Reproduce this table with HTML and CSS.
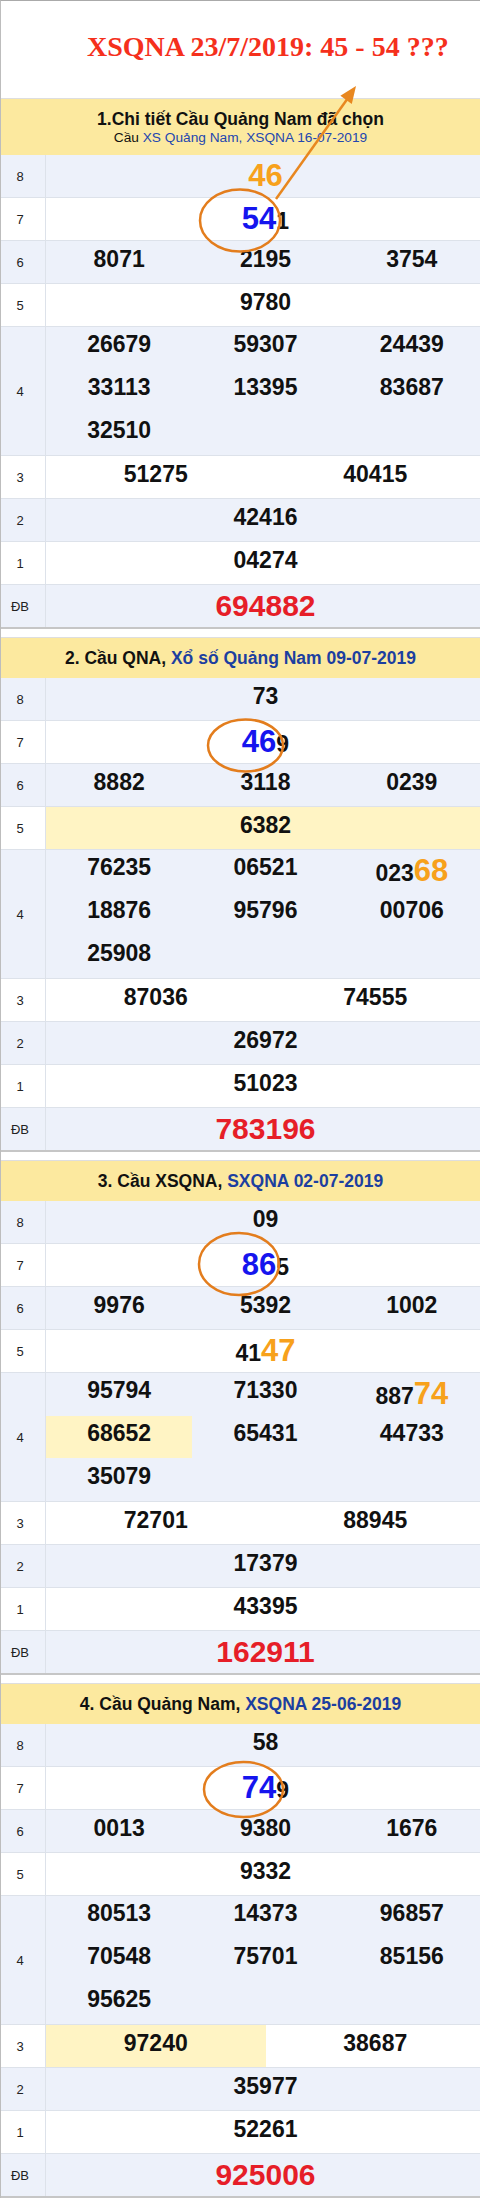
FILE: index.html
```html
<!DOCTYPE html>
<html lang="vi">
<head>
<meta charset="utf-8">
<title>XSQNA 23/7/2019</title>
<link rel="stylesheet" href="styles.css">
</head>
<body>
<div class="page">
  <div class="top"><h1 class="title">XSQNA 23/7/2019: 45 - 54 ???</h1></div>

  <section class="sec">
    <div class="head head1">
      <div class="h-title">1.Chi tiết Cầu Quảng Nam đã chọn</div>
      <div class="h-sub">Cầu <span class="blue">XS Quảng Nam, XSQNA 16-07-2019</span></div>
    </div>
    <div class="row alt"><div class="lbl">8</div><div class="nums c1"><div class="cell mix"><span><b class="big or">46</b></span></div></div></div>
    <div class="row"><div class="lbl">7</div><div class="nums c1"><div class="cell mix"><span><b class="big bl">54</b>1</span></div></div></div>
    <div class="row alt"><div class="lbl">6</div><div class="nums c3"><div class="cell"><span>8071</span></div><div class="cell"><span>2195</span></div><div class="cell"><span>3754</span></div></div></div>
    <div class="row"><div class="lbl">5</div><div class="nums c1"><div class="cell"><span>9780</span></div></div></div>
    <div class="row alt r4"><div class="lbl">4</div><div class="nums c3">
      <div class="cell"><span>26679</span></div><div class="cell"><span>59307</span></div><div class="cell"><span>24439</span></div>
      <div class="cell"><span>33113</span></div><div class="cell"><span>13395</span></div><div class="cell"><span>83687</span></div>
      <div class="cell"><span>32510</span></div>
    </div></div>
    <div class="row"><div class="lbl">3</div><div class="nums c2"><div class="cell"><span>51275</span></div><div class="cell"><span>40415</span></div></div></div>
    <div class="row alt"><div class="lbl">2</div><div class="nums c1"><div class="cell"><span>42416</span></div></div></div>
    <div class="row"><div class="lbl">1</div><div class="nums c1"><div class="cell"><span>04274</span></div></div></div>
    <div class="row alt db"><div class="lbl">ĐB</div><div class="nums c1"><div class="cell"><span>694882</span></div></div></div>
  </section>

  <section class="sec">
    <div class="head head2">2. Cầu QNA, <span class="blue">Xổ số Quảng Nam 09-07-2019</span></div>
    <div class="row alt"><div class="lbl">8</div><div class="nums c1"><div class="cell"><span>73</span></div></div></div>
    <div class="row"><div class="lbl">7</div><div class="nums c1"><div class="cell mix"><span><b class="big bl">46</b>9</span></div></div></div>
    <div class="row alt"><div class="lbl">6</div><div class="nums c3"><div class="cell"><span>8882</span></div><div class="cell"><span>3118</span></div><div class="cell"><span>0239</span></div></div></div>
    <div class="row"><div class="lbl">5</div><div class="nums c1 hl"><div class="cell"><span>6382</span></div></div></div>
    <div class="row alt r4"><div class="lbl">4</div><div class="nums c3">
      <div class="cell"><span>76235</span></div><div class="cell"><span>06521</span></div><div class="cell mix"><span>023<b class="big or">68</b></span></div>
      <div class="cell"><span>18876</span></div><div class="cell"><span>95796</span></div><div class="cell"><span>00706</span></div>
      <div class="cell"><span>25908</span></div>
    </div></div>
    <div class="row"><div class="lbl">3</div><div class="nums c2"><div class="cell"><span>87036</span></div><div class="cell"><span>74555</span></div></div></div>
    <div class="row alt"><div class="lbl">2</div><div class="nums c1"><div class="cell"><span>26972</span></div></div></div>
    <div class="row"><div class="lbl">1</div><div class="nums c1"><div class="cell"><span>51023</span></div></div></div>
    <div class="row alt db"><div class="lbl">ĐB</div><div class="nums c1"><div class="cell"><span>783196</span></div></div></div>
  </section>

  <section class="sec">
    <div class="head head2">3. Cầu XSQNA, <span class="blue">SXQNA 02-07-2019</span></div>
    <div class="row alt"><div class="lbl">8</div><div class="nums c1"><div class="cell"><span>09</span></div></div></div>
    <div class="row"><div class="lbl">7</div><div class="nums c1"><div class="cell mix"><span><b class="big bl">86</b>5</span></div></div></div>
    <div class="row alt"><div class="lbl">6</div><div class="nums c3"><div class="cell"><span>9976</span></div><div class="cell"><span>5392</span></div><div class="cell"><span>1002</span></div></div></div>
    <div class="row"><div class="lbl">5</div><div class="nums c1"><div class="cell mix"><span>41<b class="big or">47</b></span></div></div></div>
    <div class="row alt r4"><div class="lbl">4</div><div class="nums c3">
      <div class="cell"><span>95794</span></div><div class="cell"><span>71330</span></div><div class="cell mix"><span>887<b class="big or">74</b></span></div>
      <div class="cell hl"><span>68652</span></div><div class="cell"><span>65431</span></div><div class="cell"><span>44733</span></div>
      <div class="cell"><span>35079</span></div>
    </div></div>
    <div class="row"><div class="lbl">3</div><div class="nums c2"><div class="cell"><span>72701</span></div><div class="cell"><span>88945</span></div></div></div>
    <div class="row alt"><div class="lbl">2</div><div class="nums c1"><div class="cell"><span>17379</span></div></div></div>
    <div class="row"><div class="lbl">1</div><div class="nums c1"><div class="cell"><span>43395</span></div></div></div>
    <div class="row alt db"><div class="lbl">ĐB</div><div class="nums c1"><div class="cell"><span>162911</span></div></div></div>
  </section>

  <section class="sec">
    <div class="head head2">4. Cầu Quảng Nam, <span class="blue">XSQNA 25-06-2019</span></div>
    <div class="row alt"><div class="lbl">8</div><div class="nums c1"><div class="cell"><span>58</span></div></div></div>
    <div class="row"><div class="lbl">7</div><div class="nums c1"><div class="cell mix"><span><b class="big bl">74</b>9</span></div></div></div>
    <div class="row alt"><div class="lbl">6</div><div class="nums c3"><div class="cell"><span>0013</span></div><div class="cell"><span>9380</span></div><div class="cell"><span>1676</span></div></div></div>
    <div class="row"><div class="lbl">5</div><div class="nums c1"><div class="cell"><span>9332</span></div></div></div>
    <div class="row alt r4"><div class="lbl">4</div><div class="nums c3">
      <div class="cell"><span>80513</span></div><div class="cell"><span>14373</span></div><div class="cell"><span>96857</span></div>
      <div class="cell"><span>70548</span></div><div class="cell"><span>75701</span></div><div class="cell"><span>85156</span></div>
      <div class="cell"><span>95625</span></div>
    </div></div>
    <div class="row"><div class="lbl">3</div><div class="nums c2"><div class="cell hl"><span>97240</span></div><div class="cell"><span>38687</span></div></div></div>
    <div class="row alt"><div class="lbl">2</div><div class="nums c1"><div class="cell"><span>35977</span></div></div></div>
    <div class="row"><div class="lbl">1</div><div class="nums c1"><div class="cell"><span>52261</span></div></div></div>
    <div class="row alt db"><div class="lbl">ĐB</div><div class="nums c1"><div class="cell"><span>925006</span></div></div></div>
  </section>

  <svg class="marks" width="480" height="2201" viewBox="0 0 480 2201" aria-hidden="true">
    <g fill="none" stroke="#e37d1d" stroke-width="2.5">
      <ellipse cx="240" cy="220.5" rx="40" ry="31"/>
      <ellipse cx="245.5" cy="745.5" rx="37.5" ry="26"/>
      <ellipse cx="239" cy="1264" rx="40" ry="31"/>
      <ellipse cx="243.5" cy="1789.5" rx="39.5" ry="27.5"/>
      <line x1="276" y1="199" x2="348" y2="98" stroke="#e8871f"/>
    </g>
    <polygon points="356,86 351.8,103.9 340.4,95.7" fill="#e8871f"/>
  </svg>
</div>
</body>
</html>
```
FILE: styles.css
```css
* { box-sizing: border-box; }

body {
  margin: 0;
  background: #fff;
  font-family: "Liberation Sans", Arial, sans-serif;
}

.page {
  position: relative;
  width: 480px;
  border-top: 1px solid #aaaaaa;
  border-left: 1px solid #bdbdbd;
  overflow: hidden;
}

.top {
  height: 97px;
  padding: 30px 0 0 86px;
}

.title {
  margin: 0;
  font: bold 28px/32px "Liberation Serif", "Times New Roman", serif;
  color: #f5301c;
  white-space: nowrap;
}

.sec {
  border-bottom: 1px solid #c6c6c6;
}

.sec + .sec {
  margin-top: 8px;
}

.head {
  border-top: 1px solid #dedede;
  background: #fce99f;
  text-align: center;
  color: #111;
  white-space: nowrap;
}

.head1 {
  height: 57px;
  padding-top: 10px;
}

.h-title {
  font-weight: bold;
  font-size: 17.5px;
  line-height: 20px;
}

.h-sub {
  font-size: 13.7px;
  line-height: 17px;
}

.h-sub .blue {
  color: #2346b0;
}

.head2 {
  height: 41px;
  line-height: 40px;
  font-weight: bold;
  font-size: 17.5px;
}

.blue {
  color: #1c3fa0;
}

.row {
  display: grid;
  grid-template-columns: 45px 439px;
  width: 485px;
  height: 43px;
  border-bottom: 1px solid #dde2ea;
  background: #fff;
}

.row.alt {
  background: #edf1fa;
}

.row.r4 {
  height: 129px;
}

.row.db {
  border-bottom-color: #c6c6c6;
}

.lbl {
  display: flex;
  align-items: center;
  justify-content: center;
  padding-right: 6px;
  border-right: 1px solid #dde2ea;
  font-size: 13px;
  color: #222;
}

.nums {
  display: grid;
}

.c1 { grid-template-columns: 1fr; }
.c2 { grid-template-columns: 1fr 1fr; }
.c3 { grid-template-columns: 1fr 1fr 1fr; }

.r4 .nums {
  grid-auto-rows: 42.67px;
}

.hl {
  background: #fff4c4;
}

.cell {
  display: flex;
  align-items: center;
  justify-content: center;
  padding-bottom: 5px;
  font-weight: bold;
  font-size: 23px;
  color: #111;
  white-space: nowrap;
}

.r4 .cell {
  padding-bottom: 7px;
}

.cell.mix,
.r4 .cell.mix {
  padding-bottom: 0;
}

.big {
  font-size: 31px;
}

.bl { color: #1515ee; }
.or { color: #f7a11c; }

.db .cell {
  font-size: 30px;
  color: #e61e28;
  padding-bottom: 0;
}

.marks {
  position: absolute;
  top: -1px;
  left: -1px;
  pointer-events: none;
}
```
